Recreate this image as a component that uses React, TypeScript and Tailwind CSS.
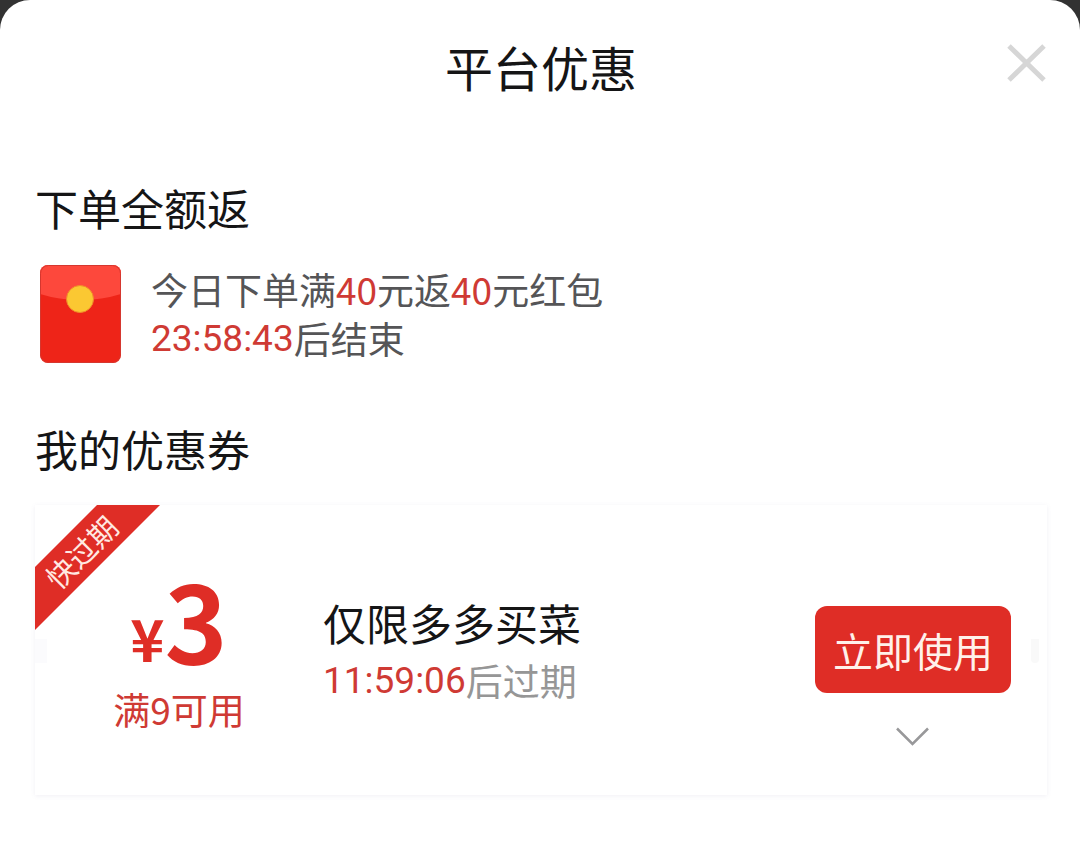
import type { ReactNode } from 'react';

const SectionTitle = ({ children }: { children: ReactNode }) => (
  <h2 className="text-[43px] leading-[60px] font-normal text-[#151516]">{children}</h2>
);

// Countdown digits use Roboto, everything else the CJK face
const Countdown = ({ children }: { children: ReactNode }) => (
  <span className="font-['Roboto',sans-serif] text-[#cf3a34]">{children}</span>
);

const RedPacket = () => (
  <svg viewBox="0 0 81 98" className="w-[81px] h-[98px] shrink-0" aria-hidden="true">
    <defs>
      <clipPath id="packet">
        <rect width="81" height="98" rx="8" />
      </clipPath>
    </defs>
    <g clipPath="url(#packet)">
      <rect width="81" height="98" fill="#ee2418" />
      <path d="M0 0H81V29Q62 35 40.500 35Q19 35 0 29Z" fill="#fd483c" />
      <rect x="0.500" y="0.500" width="80" height="97" rx="8" fill="none" stroke="#d5372f" />
    </g>
    <circle cx="40" cy="34" r="13.500" fill="#fbc832" stroke="#f08a2a" />
  </svg>
);

const Coupon = () => (
  <article className="relative flex h-[290px] bg-white shadow-[0_1px_5px_rgba(100,90,140,0.09)]">
    {/* Expiring ribbon */}
    <div className="absolute left-0 top-0 size-[125px] bg-[#df2d26] [clip-path:polygon(62px_0,100%_0,0_100%,0_62px)]">
      <div className="flex size-[92px] items-center justify-center">
        <span className="-rotate-45 whitespace-nowrap text-[29px] leading-[40px] text-[#ffe9e2]">快过期</span>
      </div>
    </div>

    {/* Side notches */}
    <span className="absolute left-0 top-[134px] w-3 h-6 bg-[#fbfbfd]" />
    <span className="absolute right-2 top-[134px] w-2 h-6 rounded-b-full bg-[#f9f9f9]" />

    <div className="w-[288px] shrink-0 pt-[66px] text-center text-[#df2d26]">
      <p className="flex h-24 items-end justify-center font-bold">
        <span className="text-[58px] leading-[60px]">¥</span>
        <span className="text-[107px] leading-[96px]">3</span>
      </p>
      <p className="mt-[18px] text-[37px] leading-[48px] text-[#cf3a34]">满9可用</p>
    </div>

    <div className="flex-1 pt-[87px]">
      <h3 className="text-[43px] leading-[60px] font-normal text-[#151516]">仅限多多买菜</h3>
      <p className="mt-1 flex items-center text-[37px] leading-[49px] text-[#969696]">
        <Countdown>11:59:06</Countdown>后过期
      </p>
    </div>

    <div className="flex shrink-0 flex-col items-center pt-[101px] pr-9">
      <button className="w-[196px] h-[87px] rounded-[12px] bg-[#df2d26] text-[40px] leading-[60px] text-[#fff1ea]">
        立即使用
      </button>
      <button aria-label="展开" className="mt-[34px]">
        <svg viewBox="0 0 34 20" className="w-[34px] h-5" fill="none" stroke="#98989a" strokeWidth="2.500">
          <path d="M1 1.500L16.500 17L32 1.500" />
        </svg>
      </button>
    </div>
  </article>
);

const App = () => {
  return (
    <div className="bg-[#323232] font-['Noto_Sans_CJK_SC',sans-serif]" lang="zh-CN">
      <div className="min-h-screen rounded-t-[30px] bg-white pl-[35px] pr-[33px] pb-14">
        <header className="grid grid-cols-[1fr_auto_1fr] pt-[30px] pb-[30px]">
          <h1 className="col-start-2 text-[48px] leading-[72px] font-normal text-[#151516]">平台优惠</h1>
          <button aria-label="关闭" className="mt-3.5 justify-self-end self-start">
            <svg viewBox="0 0 40 38" className="w-10 h-[38px]" fill="none" stroke="#d6d6d6" strokeWidth="5">
              <path d="M2 2L37 36M37 2L2 36" />
            </svg>
          </button>
        </header>

        <main className="pt-[45px]">
          <section>
            <SectionTitle>下单全额返</SectionTitle>
            <div className="mt-7 flex items-center gap-[30px] pl-[5px]">
              <RedPacket />
              <div className="text-[37px] leading-[49px] text-[#555557]">
                <p>
                  今日下单满<span className="text-[#cf3a34]">40</span>元返<span className="text-[#cf3a34]">40</span>元红包
                </p>
                <p className="flex items-center">
                  <Countdown>23:58:43</Countdown>后结束
                </p>
              </div>
            </div>
          </section>

          {/* My coupons */}
          <section className="mt-[55px]">
            <SectionTitle>我的优惠券</SectionTitle>
            <div className="mt-[27px]">
              <Coupon />
            </div>
          </section>
        </main>
      </div>
    </div>
  );
};

export default App;
